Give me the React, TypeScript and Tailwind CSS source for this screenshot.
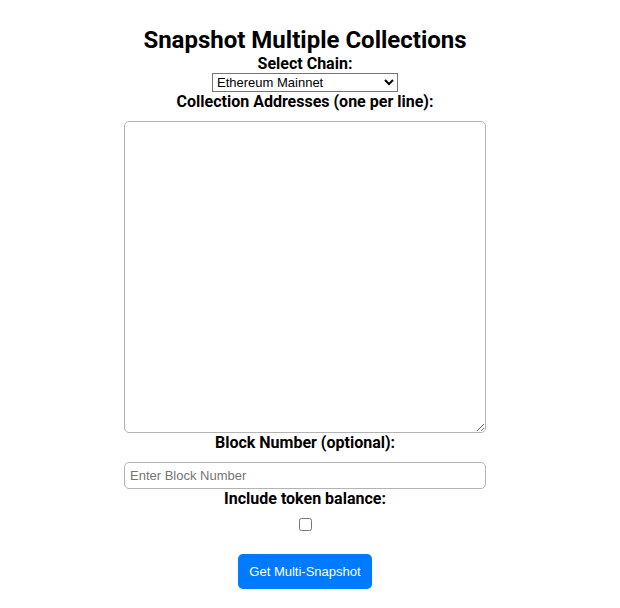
const label = 'text-base leading-[19px] font-bold';
const field = 'mt-[10px] w-full rounded-[5px] border border-[#b3b3b3] bg-white p-[5px] text-[13px] leading-[15px]';

export default function App() {
  return (
    <main className="bg-white pt-[26px] pr-[10px] pb-5 font-['Roboto',sans-serif] text-black">
      <form
        className="mx-auto flex max-w-[362px] flex-col items-center"
        onSubmit={(e) => e.preventDefault()}
      >
        <h2 className="text-2xl leading-7 font-bold">Snapshot Multiple Collections</h2>
        <label htmlFor="chain" className={label}>Select Chain:</label>
        <select
          id="chain"
          className="h-[19px] w-[186px] appearance-auto border border-[#767676] bg-white font-['Liberation_Sans',Arial,sans-serif] text-[13px] leading-[15px]"
        >
          <option>Ethereum Mainnet</option>
        </select>
        <label htmlFor="addresses" className={label}>Collection Addresses (one per line):</label>
        <textarea
          id="addresses"
          rows={20}
          className={`${field} resize font-['Liberation_Mono',monospace]`}
        />
        <label htmlFor="block" className={label}>Block Number (optional):</label>
        <input
          id="block"
          type="text"
          placeholder="Enter Block Number"
          className={`${field} font-['Liberation_Sans',Arial,sans-serif] placeholder:text-[#757575]`}
        />
        <label htmlFor="balance" className={label}>Include token balance:</label>
        <input id="balance" type="checkbox" className="mt-[10px] size-[13px]" />
        <button
          type="submit"
          className="mt-[23px] rounded-[5px] bg-[#007bff] px-[11px] py-[10px] font-['Liberation_Sans',Arial,sans-serif] text-[13px] leading-[15px] text-white"
        >
          Get Multi-Snapshot
        </button>
      </form>
    </main>
  );
}
